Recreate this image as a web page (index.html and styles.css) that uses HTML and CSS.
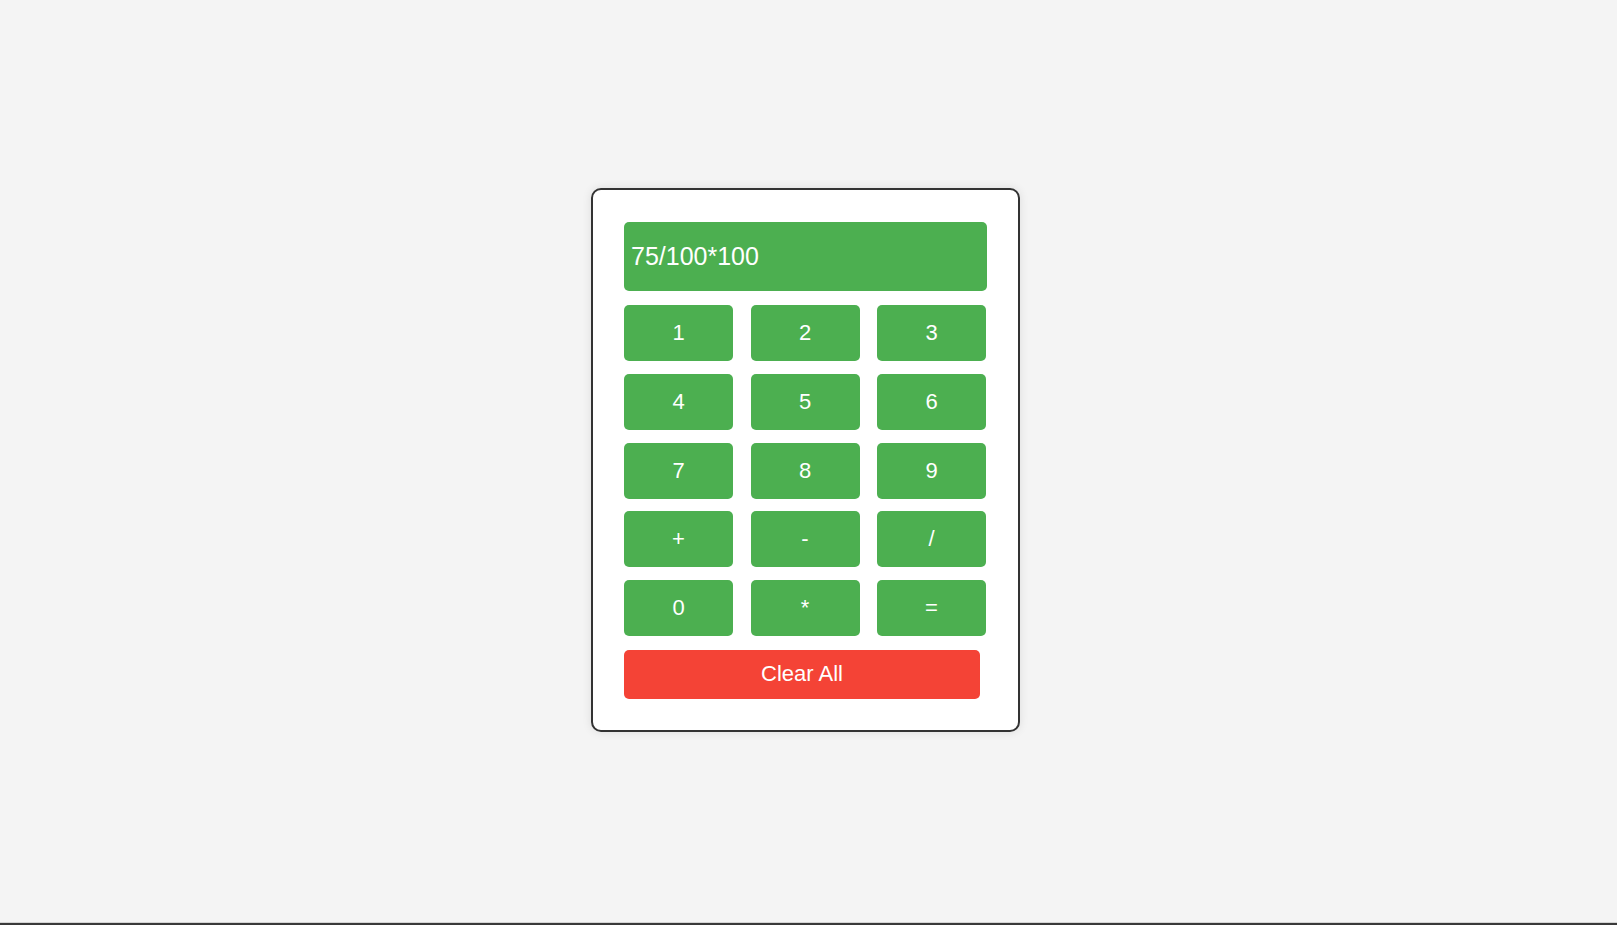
FILE: index.html
```html
<!DOCTYPE html>
<html lang="en">
<head>
<meta charset="utf-8">
<title>Calculator</title>
<link rel="stylesheet" href="styles.css">
</head>
<body>
<div class="page">
  <div class="calculator">
    <div class="display">75/100*100</div>
    <div class="keys">
      <button class="key">1</button>
      <button class="key">2</button>
      <button class="key">3</button>
      <button class="key">4</button>
      <button class="key">5</button>
      <button class="key">6</button>
      <button class="key">7</button>
      <button class="key">8</button>
      <button class="key">9</button>
      <button class="key">+</button>
      <button class="key">-</button>
      <button class="key">/</button>
      <button class="key">0</button>
      <button class="key">*</button>
      <button class="key">=</button>
    </div>
    <button class="clear">Clear All</button>
  </div>
</div>
</body>
</html>
```

FILE: styles.css
```css
* {
  box-sizing: border-box;
}

html, body {
  margin: 0;
  padding: 0;
}

body {
  background: #f4f4f4;
  font-family: "Liberation Sans", Arial, sans-serif;
}

.page {
  height: 925px;
  display: flex;
  align-items: center;
  justify-content: center;
  padding: 0 6px 3px 0;
  border-bottom: 2px solid #3a3a3a;
  box-shadow: inset 0 -1px 0 #d4d4d4;
}

.calculator {
  width: 429px;
  background: #ffffff;
  border: 2px solid #333333;
  border-radius: 10px;
  box-shadow: 0 0 10px rgba(0, 0, 0, 0.1);
  padding: 32px 31px 31.5px 31px;
  display: flex;
  flex-direction: column;
}

.display {
  width: 363px;
  height: 69px;
  background: #4caf50;
  color: #ffffff;
  border-radius: 5px;
  font-size: 25px;
  padding: 0 7px;
  display: flex;
  align-items: center;
}

.keys {
  margin-top: 14px;
  display: grid;
  grid-template-columns: 109px 109px 109px;
  column-gap: 17.5px;
  row-gap: 12.75px;
}

.key {
  height: 56px;
  border: none;
  border-radius: 5px;
  background: #4caf50;
  color: #ffffff;
  font-family: "Liberation Sans", Arial, sans-serif;
  font-size: 22px;
  padding: 0;
  cursor: pointer;
}

.clear {
  margin-top: 13.5px;
  width: 356px;
  height: 49px;
  border: none;
  border-radius: 5px;
  background: #f44336;
  color: #ffffff;
  font-family: "Liberation Sans", Arial, sans-serif;
  font-size: 22px;
  padding: 0;
  cursor: pointer;
}
```
